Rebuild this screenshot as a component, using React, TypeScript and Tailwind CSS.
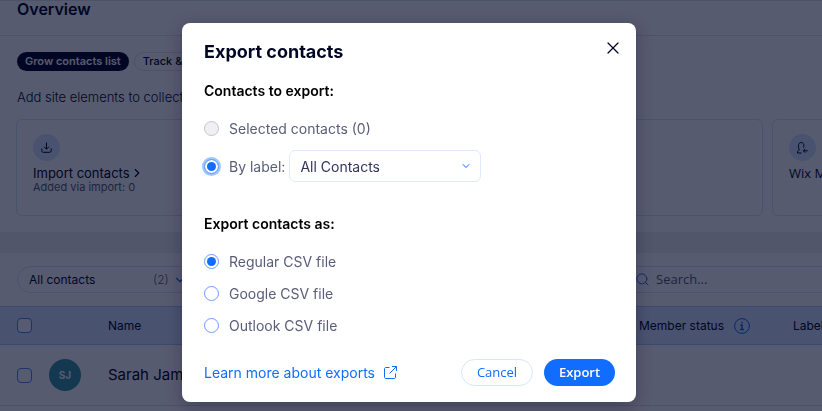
import React, { useState } from 'react';
import { ChevronDown, ChevronRight, Search, X } from 'lucide-react';

type ExportSource = 'selected' | 'label';
type ExportFormat = 'regular' | 'google' | 'outlook';

const FORMATS: { value: ExportFormat; label: string }[] = [
  { value: 'regular', label: 'Regular CSV file' },
  { value: 'google', label: 'Google CSV file' },
  { value: 'outlook', label: 'Outlook CSV file' }
];

interface RadioProps {
  id: string;
  name: string;
  label: string;
  checked: boolean;
  disabled?: boolean;
  highlighted?: boolean;
  onChange: () => void;
}

const Radio: React.FC<RadioProps> = ({ id, name, label, checked, disabled, highlighted, onChange }) => (
  <div className="flex h-5 items-center gap-[10px]">
    <input
      type="radio"
      id={id}
      name={name}
      checked={checked}
      disabled={disabled}
      onChange={onChange}
      className={`size-[15px] shrink-0 appearance-none rounded-full border border-[#6a9dff] bg-clip-content p-[2px] outline-none checked:bg-[#116dff] disabled:border-[#c4c4cc] disabled:bg-[#f0f0f3] disabled:bg-clip-border ${
        highlighted ? 'ring-2 ring-[#9cc8ff]' : ''
      }`}
    />
    <label htmlFor={id} className="whitespace-nowrap text-[14px] text-[#595d78]">
      {label}
    </label>
  </div>
);

const ImportIcon = () => (
  <svg width="11" height="11" viewBox="0 0 11 11" fill="none" stroke="#000624" strokeWidth="1">
    <path d="M5.5 .5v6.5M3 4.7l2.5 2.5L8 4.7M.8 6.5v2.3c0 .9.6 1.5 1.5 1.5h6.4c.9 0 1.5-.6 1.5-1.5V6.5" />
  </svg>
);

const MemberIcon = () => (
  <svg width="11" height="12" viewBox="0 0 11 12" fill="none" stroke="#000624" strokeWidth="1">
    <path d="M4.500 11H.5V9.800c0-.9.500-1.400 2-1.900C1.800 7 1.500 5.800 1.500 3.800 1.500 1.700 2.600.5 4.200.5s2.700 1.200 2.700 3.300c0 .8-.1 1.300-.3 1.800" />
    <path d="M10.800 8.800H6.500M8.300 6.800l-2 2 2 2" />
  </svg>
);

const ExternalIcon = () => (
  <svg width="13" height="13" viewBox="0 0 13 13" fill="none" stroke="currentColor" strokeWidth="1">
    <path d="M5.500 1.500H2c-1 0-1.500.5-1.500 1.500v8c0 1 .5 1.500 1.500 1.500h8c1 0 1.500-.5 1.500-1.500V7.500M8 .5h4.500V5M12.500.5l-7 7" />
  </svg>
);

const InfoIcon = () => (
  <svg width="16" height="16" viewBox="0 0 16 16" fill="none" stroke="#116dff">
    <circle cx="8" cy="8" r="7.400" />
    <path strokeWidth="1.500" d="M6.300 7H8v4.500M6 11.500h4M7.300 4.500h1.400" />
  </svg>
);

const ContactsPage = () => (
  <main className="min-h-screen overflow-hidden bg-white text-[#000624]">
    <header className="h-9 border-b border-[#dfe5eb]">
      <h1 className="border-t border-[#dfe5eb] px-[17px] text-[16px] leading-4 font-semibold">Overview</h1>
    </header>

    <section className="pt-4 pb-4">
      <div className="flex gap-[5px] px-[17px]">
        <button type="button" className="h-[19px] rounded-full bg-[#000624] px-2 text-[11px] font-semibold whitespace-nowrap text-white">
          Grow contacts list
        </button>
        <button type="button" className="h-[19px] rounded-full border border-[#dfe5eb] px-2 text-[11px] font-medium whitespace-nowrap">
          Track &amp; manage
        </button>
      </div>
      <p className="mt-4 px-[17px] text-[13px] leading-5 font-light whitespace-nowrap">
        Add site elements to collect visitor contact info
      </p>
      <div className="mt-3 flex gap-[9px] pl-4">
        <article className="h-[97px] grow rounded-md border border-[#d6e3ff] px-4 pt-[14px]">
          <div className="flex size-[27px] items-center justify-center rounded-full bg-[#d6e6fe]">
            <ImportIcon />
          </div>
          <h2 className="mt-1 flex items-center text-[13px] leading-4 font-normal">
            Import contacts <ChevronRight size={14} strokeWidth={2} />
          </h2>
          <p className="text-[11px] leading-3 text-[#595d78]">Added via import: 0</p>
        </article>
        <article className="-mr-10 h-[97px] w-[90px] shrink-0 rounded-md border border-[#d6e3ff] px-4 pt-[14px]">
          <div className="flex size-[27px] items-center justify-center rounded-full bg-[#d6e6fe]">
            <MemberIcon />
          </div>
          <h2 className="mt-1 font-['Open_Sans'] text-[13px] leading-4 font-medium whitespace-nowrap">Wix Members</h2>
        </article>
      </div>
    </section>

    <section className="border-t-[21px] border-[#ecf0f3]">
      <div className="flex h-[53px] items-center justify-between pl-[17px]">
        <button type="button" className="flex h-[27px] w-[184px] items-center rounded-full border border-[#d6e3ff] pl-[11px] text-left text-[12px]">
          <span className="w-[124px] font-normal">All contacts</span>
          <span className="w-5 font-light text-[#595d78]">(2)</span>
          <ChevronDown size={14} strokeWidth={2} className="shrink-0 text-[#116dff]" />
        </button>
        <div className="flex h-[27px] w-[200px] items-center gap-[6px] border-y border-[#d6e3ff] pl-[13px]">
          <Search size={15} strokeWidth={1.5} className="shrink-0 text-[#116dff]" />
          <input
            type="search"
            aria-label="Search contacts"
            placeholder="Search..."
            className="w-full font-['Open_Sans'] text-[13px] outline-none placeholder:text-[#595d78]"
          />
        </div>
      </div>

      <table className="w-full table-fixed text-left">
        <colgroup>
          <col className="w-[49px]" />
          <col className="w-[59px]" />
          <col />
          <col className="w-[154px]" />
          <col className="w-[29px]" />
        </colgroup>
        <thead>
          <tr className="h-[38px] border-y border-[#a8caff] bg-[#d6e6fe] text-[12px]">
            <th className="pl-[17px]">
              <input type="checkbox" aria-label="Select all" className="block size-[15px] appearance-none rounded-sm border border-[#4f87ff] bg-white" />
            </th>
            <th />
            <th className="font-normal">Name</th>
            <th className="font-normal whitespace-nowrap">
              <span className="flex items-center gap-[10px]">
                Member status <InfoIcon />
              </span>
            </th>
            <th className="font-normal whitespace-nowrap">Labels</th>
          </tr>
        </thead>
        <tbody>
          <tr className="h-[61px] border-b border-[#dfe5eb]">
            <td className="pl-[17px]">
              <input type="checkbox" aria-label="Select Sarah James" className="block size-[15px] appearance-none rounded-sm border border-[#4f87ff] bg-white" />
            </td>
            <td>
              <span className="flex size-8 items-center justify-center rounded-full bg-[#3899a5] text-[10px] font-bold text-white">
                SJ
              </span>
            </td>
            <td className="text-[15px]">Sarah James</td>
            <td />
            <td />
          </tr>
        </tbody>
      </table>
    </section>
  </main>
);

const ExportDialog = () => {
  const [source, setSource] = useState<ExportSource>('label');
  const [format, setFormat] = useState<ExportFormat>('regular');
  const [label, setLabel] = useState('all');

  return (
    <div className="fixed inset-0 flex items-start justify-center bg-[#000624]/66 pt-[23px] pr-1">
      <form
        role="dialog"
        aria-labelledby="export-title"
        onSubmit={e => e.preventDefault()}
        className="w-full max-w-[454px] rounded-lg bg-white pt-[17px] pr-[21px] pb-4 pl-[22px] shadow-[0_4px_16px_rgba(0,6,36,0.3)]"
      >
        <div className="flex h-6 items-center justify-between">
          <h2 id="export-title" className="text-[18px] leading-6 font-bold text-[#000624]">
            Export contacts
          </h2>
          <button type="button" aria-label="Close" className="-mr-2 mb-2 text-[#000624]">
            <X size={20} strokeWidth={1.5} />
          </button>
        </div>

        <fieldset className="mt-[17px]">
          <legend className="mb-[17px] text-[14px] leading-5 font-semibold text-black">Contacts to export:</legend>
          <Radio
            id="source-selected"
            name="source"
            label="Selected contacts (0)"
            checked={source === 'selected'}
            disabled
            onChange={() => setSource('selected')}
          />
          <div className="mt-3 flex items-center gap-1">
            <Radio
              id="source-label"
              name="source"
              label="By label:"
              checked={source === 'label'}
              highlighted
              onChange={() => setSource('label')}
            />
            <div className="relative">
              <select
                aria-label="Label"
                value={label}
                onChange={e => setLabel(e.target.value)}
                className="h-8 w-48 appearance-none rounded-md border border-[#dfe9ff] bg-white px-[10px] text-[14px] text-[#32355c]"
              >
                <option value="all">All Contacts</option>
              </select>
              <ChevronDown size={12} className="pointer-events-none absolute top-[10px] right-[9px] text-[#116dff]" />
            </div>
          </div>
        </fieldset>

        <fieldset className="mt-8">
          <legend className="mb-[17px] text-[14px] leading-5 font-semibold text-black">Export contacts as:</legend>
          <div className="flex flex-col gap-3">
            {FORMATS.map(item => (
              <Radio
                key={item.value}
                id={`format-${item.value}`}
                name="format"
                label={item.label}
                checked={format === item.value}
                onChange={() => setFormat(item.value)}
              />
            ))}
          </div>
        </fieldset>

        <div className="mt-6 flex items-center">
          <a href="#exports" className="flex items-center gap-[9px] text-[14px] whitespace-nowrap text-[#116dff]">
            Learn more about exports <ExternalIcon />
          </a>
          <div className="ml-auto flex gap-[11px] font-['Open_Sans'] text-[13px]">
            <button type="button" className="h-[27px] w-[72px] rounded-full border border-[#d6e6fe] text-[#116dff]">
              Cancel
            </button>
            <button type="submit" className="h-[27px] w-[71px] rounded-full bg-[#116dff] font-semibold text-white">
              Export
            </button>
          </div>
        </div>
      </form>
    </div>
  );
};

export default function App() {
  return (
    <div className="font-['Inter',sans-serif]">
      <ContactsPage />
      <ExportDialog />
    </div>
  );
}
